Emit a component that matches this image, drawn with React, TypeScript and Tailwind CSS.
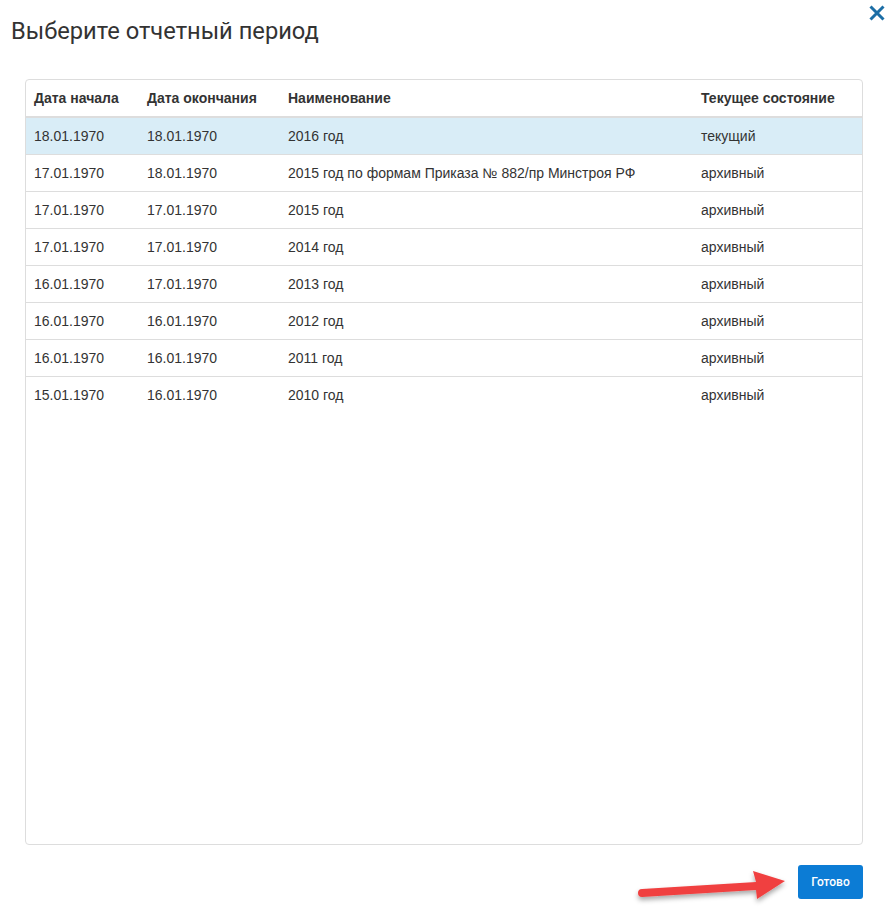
const rows = [
  { start: "18.01.1970", end: "18.01.1970", name: "2016 год", state: "текущий", active: true },
  { start: "17.01.1970", end: "18.01.1970", name: "2015 год по формам Приказа № 882/пр Минстроя РФ", state: "архивный" },
  { start: "17.01.1970", end: "17.01.1970", name: "2015 год", state: "архивный" },
  { start: "17.01.1970", end: "17.01.1970", name: "2014 год", state: "архивный" },
  { start: "16.01.1970", end: "17.01.1970", name: "2013 год", state: "архивный" },
  { start: "16.01.1970", end: "16.01.1970", name: "2012 год", state: "архивный" },
  { start: "16.01.1970", end: "16.01.1970", name: "2011 год", state: "архивный" },
  { start: "15.01.1970", end: "16.01.1970", name: "2010 год", state: "архивный" },
];

const App = () => {
  return (
    <div className="relative w-[888px] h-[916px] bg-white text-[#333]">
      {/* Header */}
      <div className="flex justify-between">
        <h1 className="ml-[11px] mt-[18px] text-[23.7px] leading-[26px] font-normal font-['Roboto',sans-serif] text-[#333]">
          Выберите отчетный период
        </h1>
        <button className="mr-[3px] mt-[5px] w-[16px] h-[16px] flex items-center justify-center">
          <svg width="16" height="16" viewBox="0 0 16 16">
            <path d="M1.5 1.5 L14.5 14.5 M14.5 1.5 L1.5 14.5" stroke="#1c6ea6" strokeWidth="3" />
          </svg>
        </button>
      </div>

      {/* Table */}
      <div className="mx-[25px] mt-[35px] h-[766px] border border-[#ddd] rounded-[4px] overflow-hidden">
        <table className="w-full table-fixed border-collapse font-['Liberation_Sans',Arial,sans-serif] text-[14px] leading-[20px]">
          <colgroup>
            <col className="w-[113px]" />
            <col className="w-[141px]" />
            <col className="w-[413px]" />
            <col />
          </colgroup>
          <thead>
            <tr className="border-b-2 border-[#ddd]">
              <th className="p-2 text-left font-bold">Дата начала</th>
              <th className="p-2 text-left font-bold">Дата окончания</th>
              <th className="p-2 text-left font-bold">Наименование</th>
              <th className="p-2 text-left font-bold">Текущее состояние</th>
            </tr>
          </thead>
          <tbody>
            {rows.map((r, i) => (
              <tr
                key={i}
                className={
                  (i > 0 ? "border-t border-[#ddd] " : "") +
                  (r.active ? "bg-[#d9edf7]" : "")
                }
              >
                <td className="p-2 whitespace-nowrap">{r.start}</td>
                <td className="p-2 whitespace-nowrap">{r.end}</td>
                <td className="p-2 whitespace-nowrap">{r.name}</td>
                <td className="p-2 whitespace-nowrap">{r.state}</td>
              </tr>
            ))}
          </tbody>
        </table>
      </div>

      {/* Footer */}
      <div className="flex justify-end mr-[25px] mt-[20px]">
        <button className="w-[65px] h-[34px] rounded-[3px] bg-[#0c7cd5] text-white text-[12px] font-medium font-['Roboto',sans-serif]">
          Готово
        </button>
      </div>

      {/* Red annotation arrow */}
      <svg
        className="absolute left-[630px] top-[860px]"
        width="170"
        height="50"
        viewBox="630 860 170 50"
      >
        <defs>
          <filter id="sh" x="-20%" y="-50%" width="140%" height="200%">
            <feDropShadow dx="0" dy="3" stdDeviation="2.5" floodColor="#000" floodOpacity="0.35" />
          </filter>
        </defs>
        <g filter="url(#sh)">
          <path
            d="M642 889 L756 882 L753 871 L785 881 L757 899 L756 890 L642 897 A4 4 0 0 1 642 889 Z"
            fill="#f04141"
          />
        </g>
      </svg>
    </div>
  );
};

export default App;
